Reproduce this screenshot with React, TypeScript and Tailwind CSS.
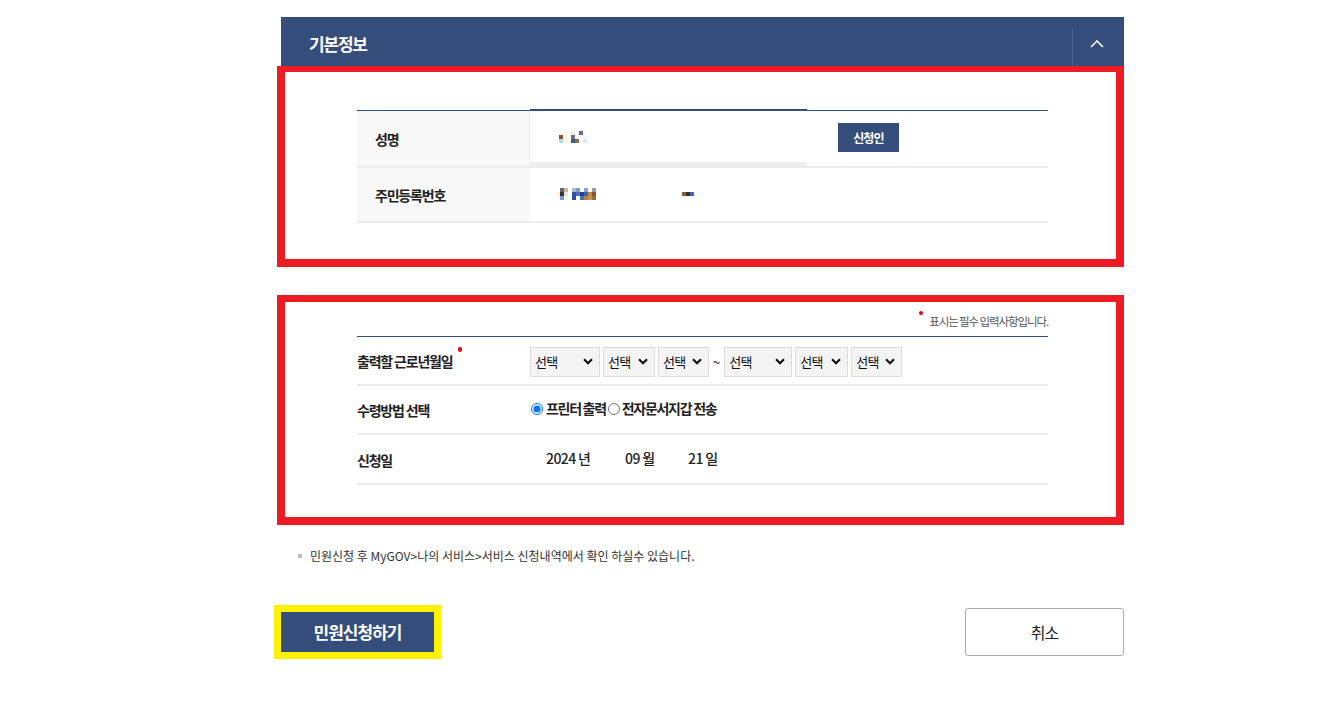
import React from 'react';

const font = { fontFamily: '"Noto Sans CJK KR", "Noto Sans", sans-serif' };

const Pixels: React.FC<{ cells: [number, number, string][]; w: number; h: number }> = ({ cells, w, h }) => (
  <svg width={w} height={h} viewBox={`0 0 ${w} ${h}`} shapeRendering="crispEdges">
    {cells.map(([x, y, c], i) => (
      <rect key={i} x={x} y={y} width="4" height="4" fill={c} />
    ))}
  </svg>
);

const nameCells: [number, number, string][] = [
  [4, 0, '#fff8e0'], [12, 0, '#ececf4'], [20, 0, '#6a6a96'],
  [0, 4, '#8d5232'], [4, 4, '#fff6da'], [12, 4, '#707070'], [24, 4, '#f0f4f8'],
  [0, 8, '#a9dcea'], [4, 8, '#fff3d2'], [12, 8, '#3f5a78'], [16, 8, '#8f6c4c'], [24, 8, '#d6ecf8'],
];

const idCells: [number, number, string][] = [
  [4, 0, '#666'], [8, 0, '#cbb9a8'], [16, 0, '#a9b8da'], [20, 0, '#7e9ac8'], [28, 0, '#8aa0c8'], [36, 0, '#999'],
  [0, 4, '#fff3d6'], [4, 4, '#333'], [8, 4, '#e8e8e8'], [16, 4, '#3550a0'], [20, 4, '#4b6fb8'], [24, 4, '#2a3f88'], [28, 4, '#3d63b0'], [32, 4, '#c08a3a'], [36, 4, '#7a5a3a'],
  [4, 8, '#6ea0d8'], [8, 8, '#fff3d6'], [16, 8, '#2f4d9c'], [24, 8, '#4a6ab0'], [28, 8, '#b07c50'], [32, 8, '#c8945a'], [36, 8, '#a06a3a'],
];

const Select: React.FC<{ w: string }> = ({ w }) => (
  <div className={`${w} h-[30px] bg-[#f4f4f4] border border-[#dcdcdc] flex items-center justify-between pl-[4px] pr-[6px] text-[13px] text-[#111] tracking-[-0.8px]`}>
    <span>선택</span>
    <svg width="10" height="7" viewBox="0 0 10 7">
      <path d="M1 1.2 L5 5.2 L9 1.2" fill="none" stroke="#111" strokeWidth="2.2" />
    </svg>
  </div>
);

export default function App() {
  return (
    <div className="min-h-screen bg-white pt-[17px] pb-[40px]" style={font}>
      <div className="ml-[281px] w-[843px]">
        {/* header */}
        <div className="h-[49px] bg-[#344d7a] flex items-center justify-between">
          <h2 className="pl-[28px] pt-[5px] text-[17px] font-bold text-white tracking-[-1.2px]">기본정보</h2>
          <div className="h-[36px] w-[52px] mt-[10px] border-l border-[#4f6792] flex items-center justify-center pb-[6px] pr-[4px]">
            <svg width="14" height="8" viewBox="0 0 14 8">
              <path d="M1 7 L7 1 L13 7" fill="none" stroke="#fff" strokeWidth="1.6" />
            </svg>
          </div>
        </div>

        {/* box 1 */}
        <div className="-ml-[4px] border-[#ed1c24] border-x-[8px] border-t-[6px] border-b-[8px] pt-[38px] pb-[36px] pl-[72px] pr-[68px]">
          <div className="border-t border-[#344d7a] text-[14px] text-[#222]">
            <div className="grid grid-cols-[173px_277px_1fr] h-[57px] border-b-2 border-[#ececec]">
              <div className="bg-[#f8f8f8] border-r border-[#eeeeee] flex items-center pl-[18px] pt-[2px] font-bold tracking-[-1.2px]">성명</div>
              <div className="-mt-[2px] border-t-2 border-[#344d7a] border-b-[4px] border-b-[#eeeeee] flex items-center pl-[29px]">
                <Pixels cells={nameCells} w={28} h={12} />
              </div>
              <div className="flex items-center pl-[31px] pb-[2px]">
                <button className="h-[29px] w-[61px] bg-[#344d7a] text-white text-[12px] font-bold tracking-[-0.8px]">신청인</button>
              </div>
            </div>
            <div className="grid grid-cols-[173px_1fr] h-[55px] border-b-2 border-[#ececec]">
              <div className="bg-[#f8f8f8] flex items-center pl-[18px] pt-[2px] font-bold tracking-[-1.2px]">주민등록번호</div>
              <div className="flex items-center pl-[26px] pb-[2px]">
                <Pixels cells={idCells} w={48} h={12} />
                <div className="ml-[78px] flex">
                  <span className="w-[4px] h-[4px] bg-[#8a5a30]" />
                  <span className="w-[4px] h-[4px] bg-[#333]" />
                  <span className="w-[4px] h-[4px] bg-[#3a66b8]" />
                </div>
              </div>
            </div>
          </div>
        </div>

        {/* box 2 */}
        <div className="-ml-[4px] mt-[28px] border-[#ed1c24] border-x-[8px] border-t-[7px] border-b-[8px] pt-[6px] pb-[32px] pl-[72px] pr-[68px]">
          <div className="flex justify-end h-[28px] items-center text-[11.5px] text-[#555] tracking-[-1.1px]">
            <span className="relative pl-[10px]">
              <span className="absolute left-0 top-[-2px] w-[4px] h-[4px] rounded-full bg-[#e60012]" />
              표시는 필수 입력사항입니다.
            </span>
          </div>
          <div className="border-t border-[#344d7a] text-[14px] text-[#222]">
            <div className="grid grid-cols-[173px_1fr] h-[49px] border-b-2 border-[#ececec] items-center">
              <div className="font-bold tracking-[-1.2px] pt-[2px]">
                <span className="relative">
                  출력할 근로년월일
                  <span className="absolute -right-[10px] top-[-4px] w-[4px] h-[5px] rounded-full bg-[#e60012]" />
                </span>
              </div>
              <div className="flex items-center gap-[3px] pt-[2px]">
                <Select w="w-[70px]" />
                <Select w="w-[52px]" />
                <Select w="w-[51px]" />
                <span className="px-[1px] text-[13px]">~</span>
                <Select w="w-[68px]" />
                <Select w="w-[53px]" />
                <Select w="w-[51px]" />
              </div>
            </div>
            <div className="grid grid-cols-[173px_1fr] h-[49px] border-b-2 border-[#ececec] items-center">
              <div className="font-bold tracking-[-1.2px] pt-[2px]">수령방법 선택</div>
              <div className="flex items-center font-bold tracking-[-1.3px] -mt-[2px]">
                <input type="radio" name="recv" defaultChecked className="m-0 ml-[1px] w-[12px] h-[12px]" />
                <span className="ml-[3px]">프린터 출력</span>
                <input type="radio" name="recv" className="m-0 ml-[2px] w-[12px] h-[12px]" />
                <span className="ml-[2px]">전자문서지갑 전송</span>
              </div>
            </div>
            <div className="grid grid-cols-[173px_1fr] h-[50px] border-b-2 border-[#ececec] items-center">
              <div className="font-bold tracking-[-1.2px] pt-[2px]">신청일</div>
              <div className="flex items-center font-medium tracking-[-0.6px] pl-[16px] -mt-[1px]">
                <span className="w-[79px]">2024 년</span>
                <span className="w-[63px]">09 월</span>
                <span>21 일</span>
              </div>
            </div>
          </div>
        </div>

        {/* note */}
        <div className="mt-[22px] flex items-center text-[12px] text-[#333] tracking-[0px] pl-[17px]">
          <span className="w-[4px] h-[4px] bg-[#bbbbbb] mr-[8px]" />
          민원신청 후 MyGOV&gt;나의 서비스&gt;서비스 신청내역에서 확인 하실수 있습니다.
        </div>

        {/* buttons */}
        <div className="mt-[40px] flex items-center justify-between">
          <div className="-ml-[7px] border-[7px] border-[#fff200]">
            <button className="h-[40px] w-[153px] bg-[#344d7a] text-white text-[17px] font-bold tracking-[-1px]">민원신청하기</button>
          </div>
          <button className="h-[48px] w-[159px] border border-[#aaaaaa] rounded-[3px] bg-white text-[16px] text-[#222] tracking-[-1px]">취소</button>
        </div>
      </div>
    </div>
  );
}
